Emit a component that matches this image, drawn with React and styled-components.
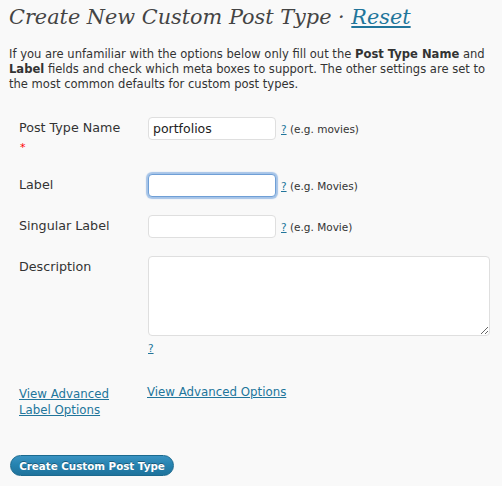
import React from "react";
import styled, { createGlobalStyle } from "styled-components";

const LINK_COLOR = "#21759b";
const TEXT_COLOR = "#333";
const UI_FONT = `"DejaVu Sans", "Liberation Sans", sans-serif`;

const GlobalStyle = createGlobalStyle`
  html, body {
    margin: 0;
    padding: 0;
    background: #f9f9f9;
  }
  body {
    font-family: ${UI_FONT};
    color: ${TEXT_COLOR};
  }
`;

const Wrap = styled.div`
  width: 502px;
  height: 486px;
  box-sizing: border-box;
  padding: 0 9px;
  overflow: hidden;
`;

const Title = styled.h2`
  margin: 0;
  padding-top: 2px;
  font-family: "DejaVu Serif", "Liberation Serif", serif;
  font-style: italic;
  font-weight: normal;
  font-size: 20.8px;
  line-height: 30px;
  color: #444;
  white-space: nowrap;

  a {
    color: ${LINK_COLOR};
  }
`;

const Intro = styled.p`
  margin: 15px 0 0;
  font-size: 11.55px;
  line-height: 15px;
`;

const Fields = styled.div`
  display: flex;
  flex-direction: column;
  gap: 18px;
  margin-top: 25px;
  padding-left: 10px;
`;

const Row = styled.div`
  display: grid;
  grid-template-columns: 129px 1fr;
  align-items: start;
`;

const LabelCell = styled.div`
  font-size: 12.7px;
  line-height: 22px;
`;

const Star = styled.div`
  color: #f00;
  font-size: 11px;
  line-height: 17px;
  padding-left: 1px;
`;

const FieldCell = styled.div`
  display: flex;
  flex-direction: ${p => p.stacked ? "column" : "row"};
  align-items: ${p => p.stacked ? "flex-start" : "center"};
`;

const TextInput = styled.input`
  box-sizing: border-box;
  width: 128px;
  height: 23px;
  margin: 0;
  padding: 2px 4px;
  border: 1px solid ${p => p.focused ? "#6f9fd6" : "#dfdfdf"};
  border-radius: 4px;
  background: #fff;
  font-family: ${UI_FONT};
  font-size: 12.5px;
  color: #222;
  outline: none;
  box-shadow: ${p => p.focused ? "0 0 1px 2px rgba(110,160,220,0.6)" : "none"};
`;

const TextArea = styled.textarea`
  box-sizing: border-box;
  display: block;
  width: 342px;
  height: 80px;
  margin: 0;
  border: 1px solid #dfdfdf;
  border-radius: 4px;
  background: #fff;
  font-family: ${UI_FONT};
  font-size: 12px;
  outline: none;
`;

const Hint = styled.span`
  margin-left: 5px;
  font-size: 10.5px;
  line-height: 16px;
`;

const HelpLink = styled.a`
  color: ${LINK_COLOR};
  text-decoration: underline;
  font-size: 10.5px;
  line-height: 16px;
  margin-top: ${p => p.below ? "4px" : "0"};
`;

const AdvancedRow = styled(Row)`
  margin-top: 28px;
  padding-left: 10px;
`;

const AdvancedLink = styled.a`
  display: block;
  color: ${LINK_COLOR};
  text-decoration: underline;
  font-size: 11.8px;
  line-height: 16px;
  margin-top: ${p => p.lift ? "0" : "2px"};
  margin-left: ${p => p.lift ? "-1px" : "0"};
`;

const SubmitButton = styled.button`
  display: block;
  margin: 37px 0 0 1px;
  height: 21px;
  width: 164px;
  padding: 0;
  border: 1px solid #1b6a8f;
  border-radius: 11px;
  background: linear-gradient(to bottom, #3a93c2 0%, #2683b0 45%, #1f739c 100%);
  color: #fff;
  font-family: ${UI_FONT};
  font-size: 10.3px;
  font-weight: bold;
  white-space: nowrap;
  text-shadow: 0 -1px 0 rgba(0,0,0,0.35);
  cursor: pointer;
`;

const fields = [
  { label: "Post Type Name", value: "portfolios", hint: "(e.g. movies)", required: true },
  { label: "Label", value: "", hint: "(e.g. Movies)", focused: true },
  { label: "Singular Label", value: "", hint: "(e.g. Movie)" },
];

export default function App() {
  return (
    <Wrap>
      <GlobalStyle />
      <Title>
        Create New Custom Post Type · <a href="#reset">Reset</a>
      </Title>
      <Intro>
        If you are unfamiliar with the options below only fill out the <b>Post Type Name</b> and{" "}
        <b>Label</b> fields and check which meta boxes to support. The other settings are set to
        the most common defaults for custom post types.
      </Intro>

      <Fields>
        {fields.map(f => (
          <Row key={f.label}>
            <LabelCell>
              {f.label}
              {f.required && <Star>*</Star>}
            </LabelCell>
            <FieldCell>
              <TextInput defaultValue={f.value} focused={f.focused} />
              <Hint>
                <HelpLink href="#help">?</HelpLink> {f.hint}
              </Hint>
            </FieldCell>
          </Row>
        ))}
        <Row>
          <LabelCell>Description</LabelCell>
          <FieldCell stacked>
            <TextArea />
            <HelpLink href="#help" below>?</HelpLink>
          </FieldCell>
        </Row>
      </Fields>

      <AdvancedRow>
        <div>
          <AdvancedLink href="#labels">View Advanced<br />Label Options</AdvancedLink>
        </div>
        <div>
          <AdvancedLink href="#advanced" lift>View Advanced Options</AdvancedLink>
        </div>
      </AdvancedRow>

      <SubmitButton type="button">Create Custom Post Type</SubmitButton>
    </Wrap>
  );
}
